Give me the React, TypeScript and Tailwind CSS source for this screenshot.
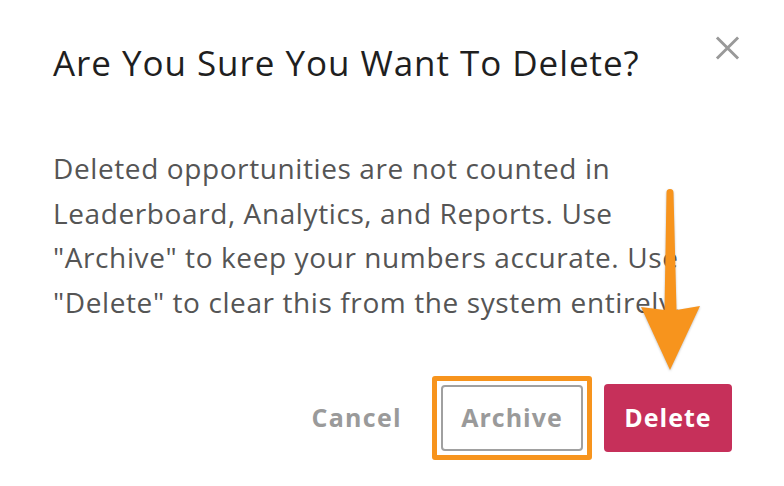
import React from "react";

export default function App() {
  return (
    <div className="relative w-[784px] h-[486px] bg-white font-['Open_Sans',sans-serif] overflow-hidden">
      <div className="flex items-start justify-between pl-[53px] pr-[44px] pt-[43px]">
        <h2 className="text-[35px] leading-[40px] text-[#1f1f1f] font-normal tracking-[0.95px]">
          Are You Sure You Want To Delete?
        </h2>
        <button className="mt-[-7px] w-[25px] h-[23px] flex items-center justify-center">
          <svg width="26" height="24" viewBox="0 0 26 24">
            <path d="M2 1 L24 23 M24 1 L2 23" stroke="#999" strokeWidth="3" fill="none" />
          </svg>
        </button>
      </div>
      <p className="pl-[53px] mt-[63px] text-[28px] leading-[44.7px] text-[#555] tracking-[0.6px]">
        <span className="block">Deleted opportunities are not counted in</span>
        <span className="block">Leaderboard, Analytics, and Reports. Use</span>
        <span className="block">"Archive" to keep your numbers accurate. Use</span>
        <span className="block">"Delete" to clear this from the system entirely.</span>
      </p>
      <div className="flex items-center justify-end pr-[52px] mt-[59px]">
        <button className="text-[25px] font-bold tracking-[1.3px] text-[#9a9a9a] mr-[39px]">Cancel</button>
        <button className="relative w-[142px] h-[66px] border-2 border-[#a0a0a0] rounded-[4px] text-[25px] font-bold tracking-[1px] text-[#9a9a9a] mr-[21px]">
          Archive
          <span className="absolute -inset-[11px] border-[5px] border-[#f7941d] rounded-[3px]" />
        </button>
        <button className="w-[128px] h-[68px] bg-[#c6305a] rounded-[4px] text-[25px] font-bold tracking-[1px] text-white">
          Delete
        </button>
      </div>
      <svg className="absolute left-[630px] top-[185px] drop-shadow-[0_1px_1px_rgba(0,0,0,0.25)]" width="80" height="190" viewBox="0 0 80 190">
        <path
          d="M40 4 C42.5 4 43.5 5 43.5 8 L46.5 125 L70 121 L40 185 L11 122 L34.5 125 L36.5 8 C36.5 5 37.5 4 40 4 Z"
          fill="#f7941d"
        />
      </svg>
    </div>
  );
}
